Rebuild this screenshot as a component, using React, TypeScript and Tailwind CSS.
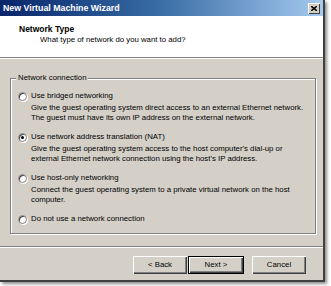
import React from "react";

const font = { fontFamily: '"Liberation Sans", Arial, sans-serif' };

function Radio({ checked }: { checked?: boolean }) {
  return (
    <span className="relative w-[9px] h-[9px] rounded-full bg-white border border-[#808080] shadow-[inset_1px_1px_0_#404040,1px_1px_0_#fff] shrink-0">
      {checked && (
        <span className="absolute left-[2px] top-[2px] w-[3px] h-[3px] rounded-full bg-black" />
      )}
    </span>
  );
}

function Option({
  label,
  desc,
  checked,
}: {
  label: string;
  desc?: string[];
  checked?: boolean;
}) {
  return (
    <div className="flex flex-col">
      <div className="flex items-center h-[10px]">
        <span className="w-[13px] flex">
          <Radio checked={checked} />
        </span>
        <span>{label}</span>
      </div>
      {desc && (
        <div className="ml-[13px] mt-[2px] flex flex-col">
          {desc.map((d) => (
            <span key={d} className="h-[10px] leading-[10px] whitespace-nowrap">
              {d}
            </span>
          ))}
        </div>
      )}
    </div>
  );
}

function Button({ children, def }: { children: React.ReactNode; def?: boolean }) {
  return (
    <div
      className={
        "h-[18px] flex items-center justify-center bg-[#d4d0c8] " +
        (def
          ? "w-[56px] border border-black shadow-[inset_1px_1px_0_#fff,inset_-1px_-1px_0_#404040,inset_-2px_-2px_0_#808080]"
          : "w-[54px] shadow-[inset_1px_1px_0_#fff,inset_-1px_-1px_0_#404040,inset_-2px_-2px_0_#808080]")
      }
    >
      {children}
    </div>
  );
}

export default function App() {
  return (
    <div className="w-[331px] h-[286px] bg-white overflow-hidden" style={font}>
      <div className="w-[325px] h-[282px] bg-[#d4d0c8] flex flex-col border-r-2 border-b-2 border-[#404040] shadow-[2px_2px_3px_rgba(0,0,0,0.45)] text-[7.8px] leading-[10px] text-black">
        {/* title bar */}
        <div className="h-[16px] shrink-0 flex items-center justify-between bg-gradient-to-r from-[#0a246a] via-[#3a6ea5] to-[#a6caf0] pl-[3px] pr-[3px]">
          <span className="text-white font-bold text-[8.8px]">New Virtual Machine Wizard</span>
          <div className="w-[12px] h-[11px] bg-[#d4d0c8] flex items-center justify-center shadow-[inset_1px_1px_0_#fff,inset_-1px_-1px_0_#404040]">
            <svg width="6" height="5" viewBox="0 0 6 5">
              <path d="M0 0L6 5M6 0L0 5" stroke="black" strokeWidth="1.5" />
            </svg>
          </div>
        </div>
        {/* header */}
        <div className="h-[41px] shrink-0 bg-white flex flex-col pl-[19px] pt-[8px]">
          <span className="font-bold text-[8.5px] leading-[10px]">Network Type</span>
          <span className="ml-[21px] mt-[1px] leading-[10px]">What type of network do you want to add?</span>
        </div>
        <div className="h-[2px] shrink-0 border-t border-[#808080] border-b border-b-white" />
        {/* body */}
        <div className="flex-1 flex flex-col pt-[19px] px-[10px]">
          <div className="relative w-[306px] border border-[#808080] shadow-[inset_1px_1px_0_#fff,1px_1px_0_#fff] pt-[12px] pb-[9px] pl-[7px] flex flex-col gap-[9px]">
            <span className="absolute -top-[6px] left-[5px] bg-[#d4d0c8] px-[2px] leading-[10px]">
              Network connection
            </span>
            <Option
              label="Use bridged networking"
              desc={[
                "Give the guest operating system direct access to an external Ethernet network.",
                "The guest must have its own IP address on the external network.",
              ]}
            />
            <Option
              checked
              label="Use network address translation (NAT)"
              desc={[
                "Give the guest operating system access to the host computer's dial-up or",
                "external Ethernet network connection using the host's IP address.",
              ]}
            />
            <Option
              label="Use host-only networking"
              desc={[
                "Connect the guest operating system to a private virtual network on the host",
                "computer.",
              ]}
            />
            <Option label="Do not use a network connection" />
          </div>
          <div className="h-[2px] mt-[12px] -mx-[10px] border-t border-[#808080] border-b border-b-white" />
          <div className="flex justify-end items-center mt-[8px] pr-[7px]">
            <Button>&lt; Back</Button>
            <div className="ml-[1px]">
              <Button def>Next &gt;</Button>
            </div>
            <div className="ml-[8px]">
              <Button>Cancel</Button>
            </div>
          </div>
        </div>
      </div>
    </div>
  );
}
